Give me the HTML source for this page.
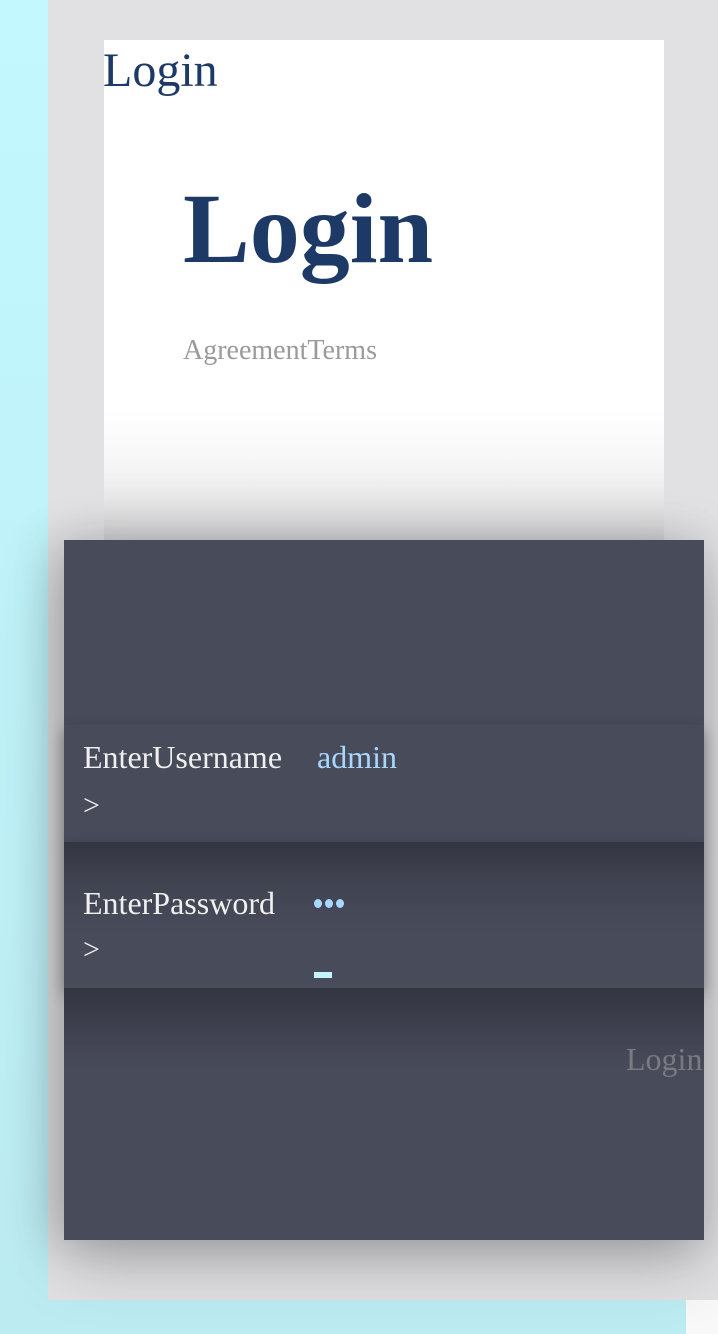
<!DOCTYPE html>
<html><head><meta charset="utf-8"><style>
*{margin:0;padding:0;box-sizing:border-box}
body{width:718px;height:1334px;background:linear-gradient(#c2f8fe,#bcecf2);position:relative;overflow:hidden;font-family:"Liberation Serif",serif}
.gray{position:absolute;left:48px;top:0;width:670px;height:1300px;background:#e1e1e3}
.br{position:absolute;left:686px;top:1300px;width:32px;height:34px;background:#f8f8f8}
.card{position:absolute;left:104px;top:40px;width:560px;height:500px;background:linear-gradient(#fff 0,#fff 370px,#f5f5f5 430px,#d4d4d6 500px)}
.t1{position:absolute;left:103px;top:47px;font-size:48px;color:#1d3a66;line-height:1}
.t2{position:absolute;left:183px;top:179px;font-size:100px;font-weight:bold;color:#1d3a66;line-height:1}
.t3{position:absolute;left:183px;top:337px;font-size:28px;color:#9a9a9a;line-height:1}
.dark{position:absolute;left:64px;top:540px;width:640px;height:700px;background:#484b5a;box-shadow:0 20px 60px rgba(0,0,0,.25),-10px 0 40px rgba(0,0,0,.15)}
.row{position:absolute;left:64px;width:640px;background:#484b5a;box-shadow:0 6px 14px rgba(0,0,0,.35)}
.lbl{position:absolute;left:19px;font-size:32px;color:#f0f0f0;line-height:1}
.gt{position:absolute;left:19px;font-size:30px;color:#f0f0f0;line-height:1}
.val{position:absolute;font-size:32px;color:#a8d8ff;line-height:1}
.login2{position:absolute;left:626px;top:1043px;font-size:32px;color:#7a7a80;line-height:1}
.dot{position:absolute;top:57px;width:8px;height:9px;border-radius:50%;background:#a8d8ff}
</style></head><body>
<div class="gray"></div><div class="br"></div>
<div class="card"></div>
<div class="t1">Login</div>
<div class="t2">Login</div>
<div class="t3">AgreementTerms</div>
<div class="dark"></div>
<div class="row" style="top:725px;height:117px">
<div class="lbl" style="top:16px">EnterUsername</div>
<div class="val" style="left:253px;top:16px">admin</div>
<div class="gt" style="top:66px">&gt;</div>
</div>
<div class="row" style="top:842px;height:146px;background:linear-gradient(#333541,#404350 40px,#484b5a 90px)">
<div class="lbl" style="top:45px">EnterPassword</div>
<div class="dot" style="left:250px"></div><div class="dot" style="left:261px"></div><div class="dot" style="left:272px"></div>
<div class="gt" style="top:93px">&gt;</div>
<div style="position:absolute;left:250px;top:130px;width:18px;height:6px;background:#c0f6fc"></div>
</div>
<div style="position:absolute;left:64px;top:988px;width:640px;height:80px;background:linear-gradient(#333541,#484b5a)"></div>
<div class="login2">Login</div>
</body></html>
